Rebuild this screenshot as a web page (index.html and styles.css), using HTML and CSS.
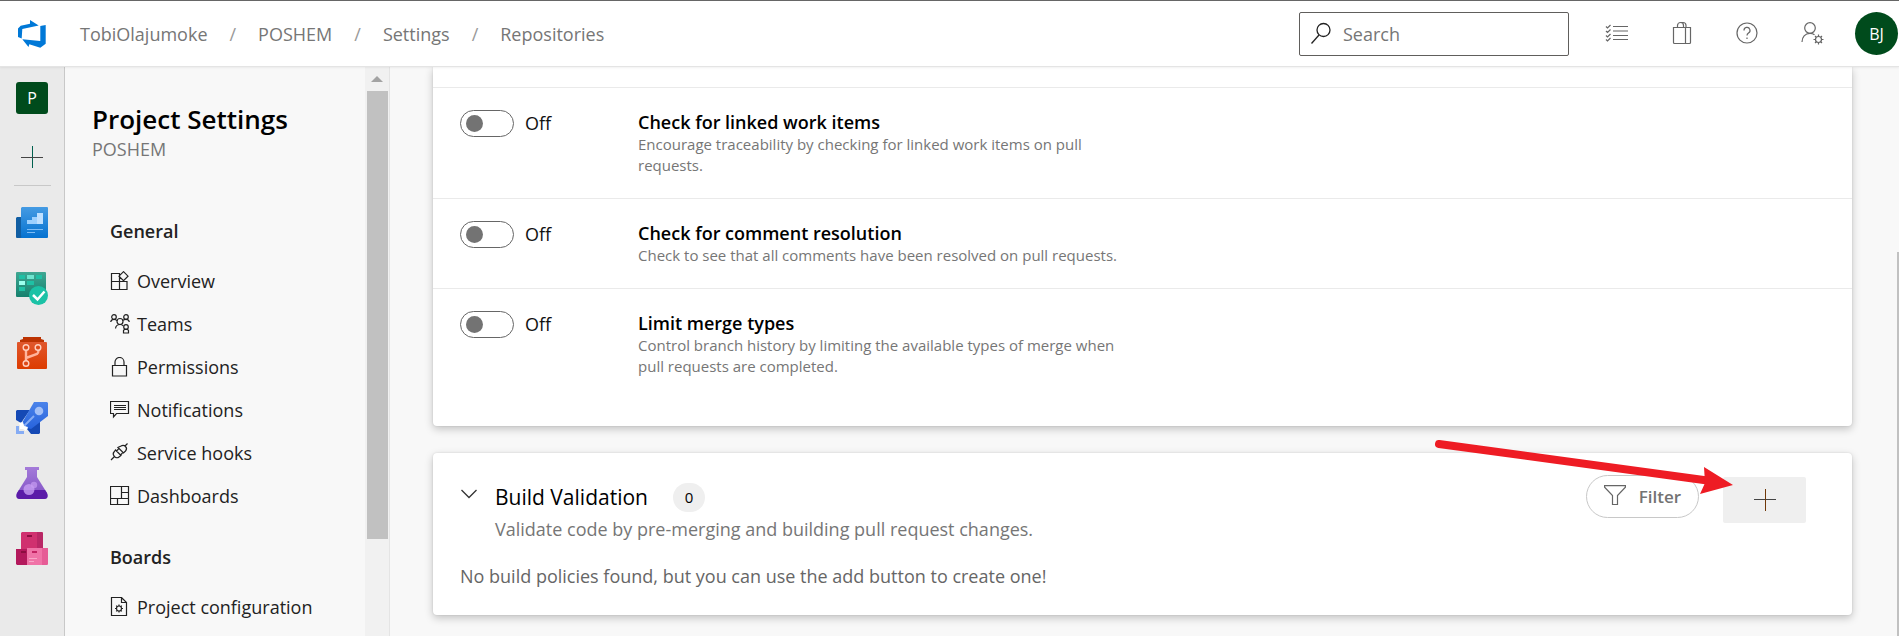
FILE: index.html
```html
<!DOCTYPE html>
<html lang="en">
<head>
<meta charset="utf-8">
<title>Project Settings - Repositories</title>
<link rel="stylesheet" href="styles.css">
</head>
<body>
<div class="app">
  <header class="topbar">
    <a class="logo" href="#" aria-label="Azure DevOps">
      <svg width="30" height="30" viewBox="0 0 30 30" fill="#0078d7"><path d="M1 9.500 3.700 6.700 13 4.700V1l8.700 5.500L5.300 10l-.6 9.500L1 18zM23.300 7l5.400-1v18.700l-5.400 4-11-3.400L11.500 28 5.300 20.300 23.300 22z"/></svg>
    </a>
    <nav class="crumbs" aria-label="Breadcrumb">
      <a href="#">TobiOlajumoke</a><span class="sep">/</span>
      <a href="#">POSHEM</a><span class="sep">/</span>
      <a href="#">Settings</a><span class="sep">/</span>
      <a href="#">Repositories</a>
    </nav>
    <label class="search">
      <svg width="22" height="24" viewBox="0 0 22 24" fill="none" stroke="#222" stroke-width="1.3"><circle cx="12.500" cy="8" r="6.500"/><path d="M8 13 .500 21.500"/></svg>
      <input type="text" placeholder="Search" aria-label="Search">
    </label>
    <div class="tools">
      <button type="button" aria-label="Work items"><svg width="24" height="24" viewBox="0 0 24 24" fill="none" stroke="#666" stroke-width="1.2"><path d="M8 5.500h15M8 10h15M8 14.500h15M8 18.500h15M1 5.500l1.500 1.500 3-3M1 10l1.500 1.500 3-3M1 14.500l1.500 1.500 3-3M1 18.500l1.500 1.500 3-3"/></svg></button>
      <button type="button" aria-label="Marketplace"><svg width="24" height="24" viewBox="0 0 24 24" fill="none" stroke="#666" stroke-width="1.2"><path d="M3.500 6.500h17v15a1 1 0 0 1-1 1h-15a1 1 0 0 1-1-1zM15.500 6.500v16M7.500 6.500v-2a3 3 0 0 1 6 0v2M11 1.500h2a3 3 0 0 1 3 3v2"/></svg></button>
      <button type="button" aria-label="Help"><svg width="24" height="24" viewBox="0 0 24 24" fill="none" stroke="#666" stroke-width="1.2"><circle cx="12" cy="12" r="10"/><path d="M9 9.500a3 3 0 1 1 4.500 2.500c-1 .7-1.500 1.200-1.500 2.500M12 16.500v1.500"/></svg></button>
      <button type="button" aria-label="User settings"><svg width="24" height="24" viewBox="0 0 24 24" fill="none" stroke="#666" stroke-width="1.2"><circle cx="10" cy="7" r="5.300"/><path d="M2 21c0-5 3-8.700 8-8.700 2 0 3.500.6 4.500 1.500"/><circle cx="18.500" cy="18.500" r="3"/><path d="M18.500 13.500v2M18.500 21.500v2M13.500 18.500h2M21.500 18.500h2M15 15l1.400 1.400M20.600 20.600 22 22M15 22l1.400-1.400M20.600 16.400 22 15"/></svg></button>
    </div>
    <button type="button" class="avatar">BJ</button>
  </header>

  <div class="body">
    <nav class="rail" aria-label="Services">
      <a class="tile" href="#">P</a>
      <button type="button" class="rail-add" aria-label="Create new"><svg width="22" height="22" viewBox="0 0 22 22"><path d="M11.500 0v22" stroke="#00604e"/><path d="M0 11.500h22" stroke="#444"/></svg></button>
      <hr>
      <a href="#" aria-label="Overview"><svg width="32" height="32" viewBox="0 0 32 32"><defs><linearGradient id="ov" x2="0" y2="1"><stop stop-color="#459be3"/><stop offset="1" stop-color="#0572d0"/></linearGradient></defs><path d="M1 10h6v21H1a1 1 0 0 1-1-1V11z" fill="#115ea3"/><path d="M6 0h25a1 1 0 0 1 1 1v29a1 1 0 0 1-1 1H4q2 0 1-3V1z" fill="url(#ov)"/><path d="M11 13h5v-3h5V6h6v11H11z" fill="#9cd0ff"/><path d="M21 6h6v11h-6z" fill="#bfe0ff"/><path d="M11 22.500h16M11 25.500h8" stroke="#7dbcf5"/></svg></a>
      <a href="#" aria-label="Boards"><svg width="32" height="34" viewBox="0 0 32 34"><defs><linearGradient id="bo" x2="0" y2="1"><stop stop-color="#3fa793"/><stop offset="1" stop-color="#16816e"/></linearGradient></defs><rect width="30" height="25" rx="1" fill="url(#bo)"/><path d="M3 3h6v4H3zM20 3h6v4h-6zM11 9h7v4h-7zM3 15h6v4H3z" fill="#1fc0a4"/><path d="M11 3h7v4h-7z" fill="#6ce5cf"/><path d="M3 9h6v4H3z" fill="#9cffee"/><circle cx="22.500" cy="23.500" r="9.500" fill="#1bc2a6"/><path d="m17 23 4.500 4.500 7-8" fill="none" stroke="#fff" stroke-width="2.500"/></svg></a>
      <a href="#" aria-label="Repos"><svg width="32" height="32" viewBox="0 0 32 32"><defs><linearGradient id="re" x2="0" y2="1"><stop stop-color="#e0572d"/><stop offset="1" stop-color="#dd3c00"/></linearGradient></defs><path d="M7 0h18v2l3 1v3H4V3l3-1z" fill="#bc3302"/><rect x="1" y="5" width="30" height="27" rx="1" fill="url(#re)"/><path d="M10 13v11M10 21l11-4q1.500-1 1.500-4" fill="none" stroke="#ffb39b" stroke-width="2.400"/><g fill="#dd4a1a" stroke="#ffd0c0" stroke-width="1.400"><circle cx="10" cy="10.500" r="2.800"/><circle cx="22" cy="10.500" r="2.800"/><circle cx="10" cy="26.500" r="2.800"/></g></svg></a>
      <a href="#" aria-label="Pipelines"><svg width="32" height="32" viewBox="0 0 32 32"><defs><linearGradient id="pi" x2="0" y2="1"><stop stop-color="#4b83ea"/><stop offset="1" stop-color="#2763dc"/></linearGradient></defs><path d="M1 8h13L5 21l-5-3V9zM24 16v15l-1 1h-8l-4-5z" fill="#1549b5"/><path d="M18 0h13l1 1v13L15 27l-4-1-5-5z" fill="url(#pi)"/><circle cx="23" cy="9" r="4.300" fill="#a3c0f7"/><path d="m8 24 10-10" stroke="#86acf4" stroke-width="2"/><path d="M0 24h3v5h5v3H0z" fill="#86acf4"/><path d="m3 21 4-1 1 4 4 1-2 4-3-2H4v-3z" fill="#fff"/></svg></a>
      <a href="#" aria-label="Test Plans"><svg width="32" height="32" viewBox="0 0 32 32"><defs><linearGradient id="te" x2="0" y2="1"><stop stop-color="#a47bd9"/><stop offset="1" stop-color="#8050c4"/></linearGradient></defs><path d="M9 0h14v3h-2v7l10 16q2 6-3 6H4q-5 0-3-6L11 10V3H9z" fill="url(#te)"/><path d="M3 23h26l2 3q2 6-3 6H4q-5 0-3-6z" fill="#5b1ba8"/><circle cx="13" cy="22.500" r="5.500" fill="#c79df2" opacity=".8"/><circle cx="18" cy="18" r="3.200" fill="#c79df2" opacity=".7"/></svg></a>
      <a href="#" aria-label="Artifacts"><svg width="32" height="33" viewBox="0 0 32 33"><path d="M5 1 6 0h20l1 1v16H5z" fill="#d0306f"/><path d="M21 0h5l1 1v16h-6z" fill="#b92765"/><path d="M0 17h11v16H1l-1-1z" fill="#b3195c"/><path d="M11 16h21v16l-1 1H11z" fill="#f073a7"/><path d="M26 16h6v16l-1 1h-5z" fill="#e65c96"/><path d="M11 3h5v2h-5zM5 19h5v2H5z" fill="#8c0d40"/><path d="M16 19h5v2h-5z" fill="#c42464"/><path d="M13 26.500h8M13 29.500h5" stroke="#f9a5c8"/></svg></a>
    </nav>

    <aside class="side">
      <div class="side-content">
        <h1>Project Settings</h1>
        <p class="project">POSHEM</p>
        <h2>General</h2>
        <ul>
          <li><a href="#"><svg class="ico" viewBox="0 0 20 20"><path d="M1.500 2.500h8v16h-8zM1.500 10.500h15.500v8h-15.500M9.500 10.500h7.500M13.500.700l4.500 4.500-4.500 4.500L9 5.200z"/></svg>Overview</a></li>
          <li><a href="#"><svg class="ico" viewBox="0 0 20 20"><circle cx="4" cy="3" r="2.300"/><circle cx="16" cy="3" r="2.300"/><circle cx="10" cy="7.500" r="3"/><circle cx="16" cy="13" r="2.300"/><path d="M.7 8C1 6.300 2.300 5.300 4 5.300c1.500 0 2.500.7 3 1.500M13 6.500c.6-.8 1.600-1.200 3-1.200 1.700 0 3 1 3.300 2.700M5.500 14.500c.3-2.500 2-4 4.500-4 1.500 0 2.500.5 3.300 1.500M13.500 19v-2.500l1-1.200h3l1 1.200V19z"/></svg>Teams</a></li>
          <li><a href="#"><svg class="ico" viewBox="0 0 20 20"><path d="M2.500 8.500h14v10.500h-14zM5 8.500V5a4.500 4.500 0 0 1 9 0v3.500"/></svg>Permissions</a></li>
          <li><a href="#"><svg class="ico" viewBox="0 0 20 20"><path d="M.5 1.500h18v12H6.500L3.500 17v-3.500h-3zM4 5.500h12M4 7.500h12M4 9.500h12"/></svg>Notifications</a></li>
          <li><a href="#"><svg class="ico" viewBox="0 0 20 20"><path d="m1 17 4-4M14.500 3.500l3-3M5.500 7 11 12.500l-2 1.500c-2 1.500-4 .5-5-1s-1-3 0-4zM8 4.500 13.500 10l2-2c1.300-1.500 1-3.500 0-4.500s-3-1.500-4.500-.5zM6.500 8l2-2M10.500 12l2-2"/></svg>Service hooks</a></li>
          <li><a href="#"><svg class="ico" viewBox="0 0 20 20"><path d="M.5.500h18v18H.5zM11.500.500v12M11.500 6.500h7M.5 12.500h18M7.500 12.500v6"/></svg>Dashboards</a></li>
        </ul>
        <h2>Boards</h2>
        <ul>
          <li><a href="#"><svg class="ico" viewBox="0 0 20 20"><path d="M1.500.500h10l5 5v13h-15zM11.500.500v5h5"/><circle cx="9" cy="11.500" r="2.500"/><path d="M9 7.500V9M9 14v1.500M5 11.500h1.500M11.500 11.500H13M6.200 8.700l1 1M10.800 13.300l1 1M6.200 14.300l1-1M10.800 9.700l1-1"/></svg>Project configuration</a></li>
        </ul>
      </div>
      <div class="scroll" aria-hidden="true"><span class="up"></span><span class="thumb"></span></div>
    </aside>

    <main class="main">
      <section class="card policies">
        <div class="row">
          <label class="toggle"><input type="checkbox" role="switch" aria-label="Check for linked work items">Off</label>
          <div class="info"><h3>Check for linked work items</h3><p>Encourage traceability by checking for linked work items on pull requests.</p></div>
        </div>
        <div class="row">
          <label class="toggle"><input type="checkbox" role="switch" aria-label="Check for comment resolution">Off</label>
          <div class="info"><h3>Check for comment resolution</h3><p>Check to see that all comments have been resolved on pull requests.</p></div>
        </div>
        <div class="row">
          <label class="toggle"><input type="checkbox" role="switch" aria-label="Limit merge types">Off</label>
          <div class="info"><h3>Limit merge types</h3><p>Control branch history by limiting the available types of merge when pull requests are completed.</p></div>
        </div>
      </section>

      <section class="card build">
        <div class="build-head">
          <button type="button" class="chevron" aria-label="Collapse"><svg width="18" height="10" viewBox="0 0 18 10" fill="none" stroke="#333" stroke-width="1.300"><path d="m1.500 1 7.500 7.500L16.500 1"/></svg></button>
          <div class="build-title">
            <h2>Build Validation <span class="count">0</span></h2>
            <p>Validate code by pre-merging and building pull request changes.</p>
          </div>
          <button type="button" class="filter"><svg width="22" height="24" viewBox="0 0 22 24" fill="none" stroke="#666" stroke-width="1.200"><path d="M.600.700h20.800v1.500L13.500 10.500v9h-5v-9L.600 2.200z"/></svg>Filter</button>
          <button type="button" class="add" aria-label="Add build policy"><svg width="22" height="22" viewBox="0 0 22 22"><path d="M0 10.500h22" stroke="#444"/><path d="M11.500 0v22" stroke="#703808"/></svg></button>
          <svg class="arrow" width="300" height="60" viewBox="0 0 300 60"><path d="M6 10 278 47" stroke="#ee1c24" stroke-width="8" stroke-linecap="round"/><path d="m271 33 29 18-33 9 5-11z" fill="#ee1c24"/></svg>
        </div>
        <p class="empty">No build policies found, but you can use the add button to create one!</p>
      </section>
      <div class="page-thumb" aria-hidden="true"></div>
    </main>
  </div>
</div>
</body>
</html>
```
FILE: styles.css
```css
* { box-sizing: border-box; }
body { margin: 0; font-family: "Open Sans", "Noto Sans", sans-serif; font-size: 18px; line-height: 24px; color: #222; overflow: hidden; }
h1, h2, h3, p, ul { margin: 0; padding: 0; }
ul { list-style: none; }
a { color: inherit; text-decoration: none; }
button { border: 0; padding: 0; background: none; font: inherit; color: inherit; display: flex; align-items: center; justify-content: center; }
svg { display: block; flex: none; }

.app { display: flex; flex-direction: column; height: 100vh; }
.topbar { position: relative; z-index: 1; display: flex; align-items: center; flex: none; height: 67px; padding: 0 1px 0 17px; background: #fff; border-top: 1px solid #666; border-bottom: 1px solid #e4e4e4; box-shadow: 0 1px 2px rgba(0,0,0,.06); }
.crumbs { display: flex; align-items: center; gap: 22px; margin-left: 33px; color: #767676; }
.sep { color: #999; }
.search { display: flex; align-items: center; gap: 10px; width: 270px; height: 44px; margin-left: auto; padding: 0 11px; border: 1px solid #605e5c; border-radius: 2px; }
.search input { flex: 1; min-width: 0; border: 0; outline: 0; padding: 0; font: inherit; background: none; }
.search input::placeholder { color: #767676; opacity: 1; }
.tools { display: flex; gap: 41px; margin: 0 31px 2px 36px; }
.avatar { width: 43px; height: 43px; border-radius: 50%; background: #004b1c; color: #fff; font-size: 16px; }

.body { display: flex; flex: 1; min-height: 0; }
.rail { display: flex; flex-direction: column; align-items: center; flex: none; width: 65px; padding-top: 15px; background: #eaeaea; border-right: 1px solid #c8c8c8; }
.tile { display: flex; align-items: center; justify-content: center; width: 32px; height: 32px; border-radius: 3px; background: #004b1c; color: #fff; font-size: 16px; }
.rail-add { margin: 32px 0 17px; }
.rail hr { width: 37px; margin: 0 0 21px; border: 0; border-top: 1px solid #c8c8c8; }
.rail > a:not(.tile) { display: flex; align-items: flex-start; height: 33px; margin-bottom: 32px; }

.side { display: flex; flex: none; width: 325px; background: #f8f8f8; border-right: 1px solid #e4e4e4; }
.side-content { flex: 1; min-width: 0; padding: 36px 0 0 27px; overflow: hidden; white-space: nowrap; }
.side h1 { font-size: 26px; line-height: 32px; font-weight: 600; color: #000; }
.project { color: #767676; line-height: 28px; }
.side h2 { margin: 56px 0 16px 18px; font-size: 18px; font-weight: 600; }
.side ul + h2 { margin-top: 28px; }
.side li a { display: flex; align-items: center; gap: 7px; height: 43px; padding-left: 18px; }
.ico { width: 20px; height: 20px; fill: none; stroke: #222; stroke-width: 1.2; }
.scroll { display: flex; flex-direction: column; align-items: center; width: 24px; padding-top: 9px; background: #f1f1f1; }
.up { border: 6px solid transparent; border-top: 0; border-bottom-color: #a3a3a3; }
.thumb { width: 21px; height: 80%; margin-top: 9px; background: #c1c1c1; }

.main { position: relative; flex: 1; min-width: 0; padding: 0 47px 0 43px; background: #f8f8f8; }
.card { background: #fff; border-radius: 4px; box-shadow: 0 3px 8px rgba(0,0,0,.22), 0 0 2px rgba(0,0,0,.12); }
.policies { padding: 20px 0 27px; border-radius: 0 0 4px 4px; }
.row { display: flex; padding: 22px 27px; border-top: 1px solid #eaeaea; }
.toggle { display: flex; align-items: center; gap: 11px; width: 178px; height: 26px; color: #111; }
.toggle input { appearance: none; width: 54px; height: 27px; margin: 0; padding: 4px 5px; border: 1px solid #666; border-radius: 14px; }
.toggle input::before { content: ""; display: block; width: 17px; height: 17px; border-radius: 50%; background: #737373; }
.info { flex: 1; max-width: 500px; }
.info h3 { font-size: 18px; font-weight: 600; color: #000; }
.info p { font-size: 15px; line-height: 21px; color: #767676; }

.build { margin-top: 27px; padding: 22px 46px 27px 27px; }
.build-head { position: relative; display: flex; align-items: flex-start; }
.chevron { width: 18px; height: 38px; margin-right: 17px; }
.build-title { flex: 1; color: #767676; }
.build-title h2 { display: flex; align-items: center; gap: 25px; height: 44px; font-size: 21px; font-weight: 400; color: #000; }
.build-title p { line-height: 20px; }
.count { width: 32px; height: 29px; border-radius: 15px; background: #efefef; font-size: 15px; line-height: 29px; text-align: center; }
.filter { gap: 13px; width: 113px; height: 43px; margin-right: 24px; border: 1px solid #c8c8c8; border-radius: 22px; color: #737373; font-weight: 600; font-size: 17px; }
.add { width: 83px; height: 46px; margin-top: 2px; background: #efefef; border-radius: 2px; }
.arrow { position: absolute; right: 73px; top: -41px; pointer-events: none; }
.empty { margin-top: 25px; color: #666; }
.page-thumb { position: absolute; right: 0; top: 185px; bottom: 0; width: 2px; background: #c1c1c1; }
```
